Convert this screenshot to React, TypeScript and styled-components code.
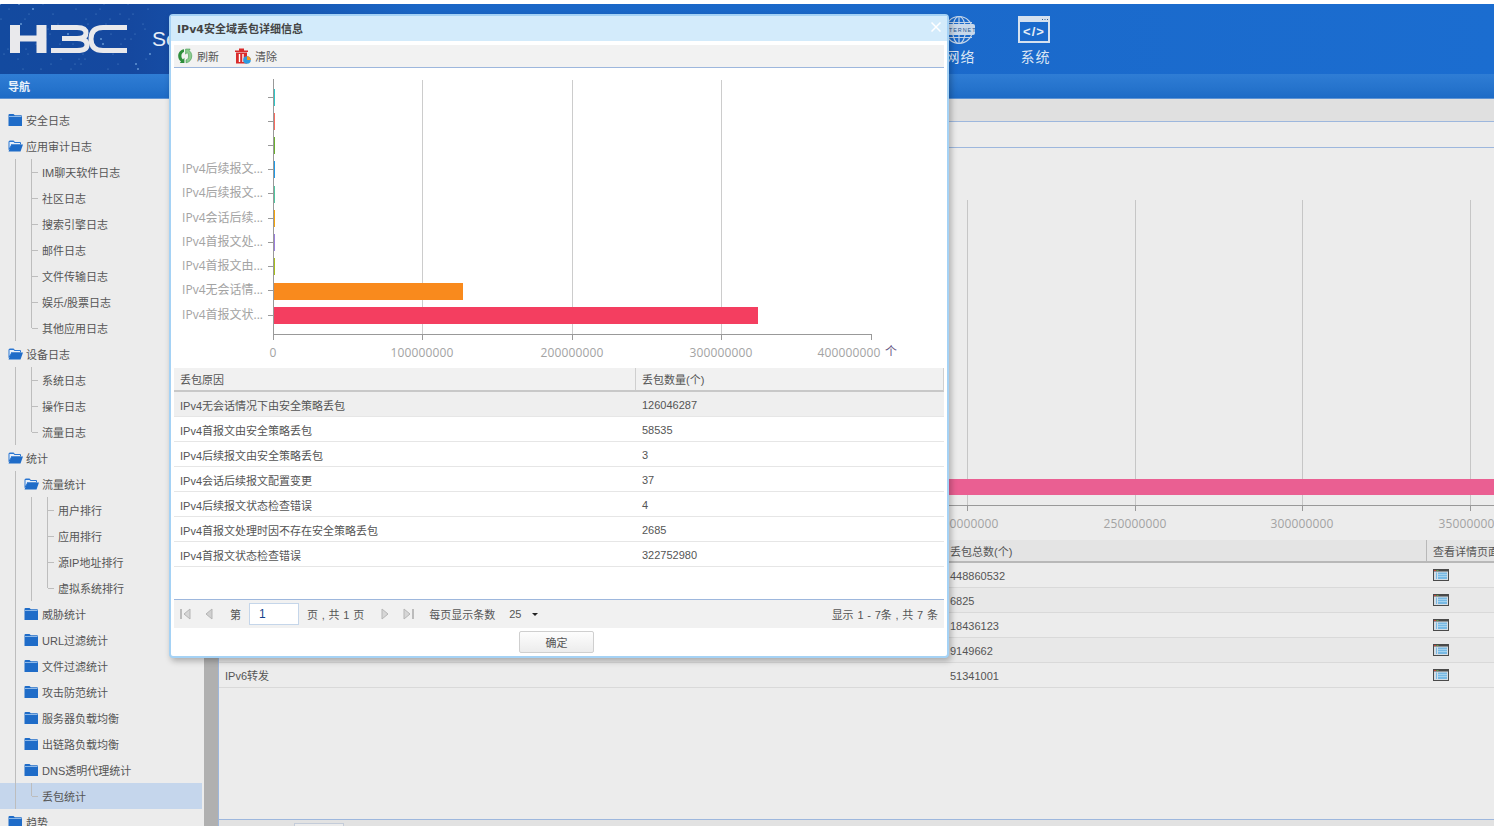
import React from "react";
import styled, { createGlobalStyle } from "styled-components";

const Global = createGlobalStyle`
  html, body { margin: 0; padding: 0; height: 100%; background: #fff; overflow: hidden; }
  * { box-sizing: border-box; }
  body { font-family: "Liberation Sans", "Noto Sans CJK SC", sans-serif; font-size: 11px; color: #555; }
`;

const Page = styled.div`
  position: relative;
  width: 1494px;
  height: 826px;
  padding-top: 4px;
  display: flex;
  flex-direction: column;
  overflow: hidden;
  background: #ececec;
  box-shadow: inset 0 4px 0 #fff;
`;

const Header = styled.header`
  height: 70px;
  flex: none;
  display: flex;
  align-items: flex-start;
  background: linear-gradient(90deg, #134a9f 0, #15489f 130px, #1a66c6 420px, #1b6dd0 100%);
`;
const Brand = styled.div`
  position: relative;
  width: 152px;
  height: 70px;
  flex: none;
`;
const Stars = styled.svg`
  position: absolute;
  inset: 0;
`;
const ProductTitle = styled.div`
  margin-top: 23px;
  font-size: 21px;
  line-height: 24px;
  color: #e6eef8;
`;
const NavGroup = styled.nav`
  margin-left: auto;
  padding-right: 421px;
  display: flex;
`;
const NavItem = styled.div`
  width: 75px;
  height: 70px;
  padding-top: 11px;
  display: flex;
  flex-direction: column;
  align-items: center;
  color: #dbe6f4;
  font-size: 14px;
  line-height: 18px;
  letter-spacing: 1px;
`;
const NavIcon = styled.svg`
  width: 34px;
  height: 30px;
  margin: 0 3px 3px 0;
  flex: none;
`;
const NavBar = styled.div`
  height: 25px;
  flex: none;
  padding-left: 8px;
  display: flex;
  align-items: center;
  font-weight: bold;
  font-size: 11px;
  color: #e9f1fb;
  background: linear-gradient(#2f7dd5, #2573cc 60%, #1d6bc6);
  border-bottom: 1px solid #5e93d3;
`;
const Main = styled.div`
  flex: 1;
  min-height: 0;
  display: flex;
`;

const Sidebar = styled.aside`
  width: 204px;
  flex: none;
  padding: 8px 2px 0 0;
  overflow: hidden;
  background: #ececec;
`;
const TreeRow = styled.div<{ $selected?: boolean }>`
  height: 26px;
  padding-left: 8px;
  display: flex;
  align-items: center;
  white-space: nowrap;
  color: #555;
  background: ${(p) => (p.$selected ? "#c5d6ec" : "transparent")};
`;
const Guide = styled.span<{ $kind: "line" | "tee" | "end" }>`
  position: relative;
  width: 16px;
  height: 26px;
  flex: none;
  &::before {
    content: "";
    position: absolute;
    left: 7px;
    top: 0;
    width: 1px;
    height: ${(p) => (p.$kind === "end" ? "13px" : "26px")};
    background: #bdbdbd;
  }
  &::after {
    content: "";
    display: ${(p) => (p.$kind === "line" ? "none" : "block")};
    position: absolute;
    left: 8px;
    top: 13px;
    width: 6px;
    height: 1px;
    background: #bdbdbd;
  }
`;
const LeafLabel = styled.span`
  margin-left: 2px;
`;
const FolderIcon = styled.svg`
  width: 15px;
  height: 14px;
  margin-right: 3px;
  margin-top: -1px;
  flex: none;
`;
const Splitter = styled.div`
  width: 14px;
  flex: none;
  background: #b0b0b0;
`;

const Content = styled.section`
  flex: 1;
  min-width: 0;
  display: flex;
  flex-direction: column;
  border-left: 1px solid #9db7dd;
  background: #ececec;
`;
const TopBand = styled.div`
  height: 23px;
  flex: none;
  background: #e0e0e0;
  border-bottom: 1px solid #9db7dd;
`;
const SubBand = styled.div`
  height: 26px;
  flex: none;
  border-bottom: 1px solid #9db7dd;
`;
const BackChart = styled.svg`
  display: block;
  width: 1275px;
  height: 392px;
  flex: none;
`;
const BackHead = styled.div`
  height: 23px;
  flex: none;
  display: grid;
  grid-template-columns: 725px 482px 1fr;
  align-items: center;
  background: #e4e4e4;
  border-bottom: 2px solid #b8b8b8;
  white-space: nowrap;
  overflow: hidden;
`;
const BackRow = styled.div<{ $alt?: boolean }>`
  height: 25px;
  flex: none;
  display: grid;
  grid-template-columns: 725px 482px 1fr;
  align-items: center;
  border-bottom: 1px solid #d9d9d9;
  background: ${(p) => (p.$alt ? "#e8e8e8" : "#ececec")};
`;
const BackCell = styled.div<{ $edge?: string; $body?: boolean }>`
  padding-left: 6px;
  padding-top: ${(p) => (p.$body ? 1 : 0)}px;
  height: 100%;
  display: flex;
  align-items: center;
  border-left: ${(p) => (p.$edge ? `1px solid ${p.$edge}` : "none")};
`;
const DetailIcon = styled.svg`
  width: 16px;
  height: 12px;
  margin-top: -2px;
`;
const ScrollFoot = styled.div`
  margin-top: auto;
  height: 7px;
  flex: none;
  padding-left: 75px;
  background: #e2e2e2;
  border-top: 1px solid #9db7dd;
`;
const ScrollThumb = styled.div`
  width: 50px;
  height: 6px;
  margin-top: 3px;
  background: #ececec;
  border: 1px solid #c4ccd9;
  border-bottom: none;
`;

const Dialog = styled.div`
  position: absolute;
  left: 169px;
  top: 14px;
  width: 780px;
  height: 644px;
  display: flex;
  flex-direction: column;
  background: #fff;
  border: 2px solid #a5d2f5;
  border-radius: 4px;
  box-shadow: 2px 3px 6px rgba(0, 0, 0, 0.28);
`;
const DialogTitle = styled.div`
  height: 25px;
  flex: none;
  padding: 0 6px 2px;
  display: flex;
  align-items: center;
  justify-content: space-between;
  font-family: "DejaVu Sans", "Noto Sans CJK SC", sans-serif;
  font-weight: bold;
  color: #444;
  background: #d3ebfb;
`;
const CloseIcon = styled.svg`
  width: 10px;
  height: 10px;
  margin: -1px 0 0;
`;
const DialogBody = styled.div`
  flex: 1;
  min-height: 0;
  padding: 4px 3px 0;
  display: flex;
  flex-direction: column;
`;
const Toolbar = styled.div`
  height: 23px;
  flex: none;
  display: flex;
  align-items: center;
  padding-left: 3px;
  background: #f2f2f2;
  border-bottom: 1px solid #9db7dd;
`;
const ToolButton = styled.div`
  display: flex;
  align-items: center;
  gap: 4px;
  margin-right: 16px;
`;
const ToolIcon = styled.svg`
  width: 16px;
  height: 16px;
  flex: none;
`;
const ChartSvg = styled.svg`
  display: block;
  width: 770px;
  height: 300px;
  flex: none;
`;
const ReasonHead = styled.div`
  height: 24px;
  flex: none;
  display: grid;
  grid-template-columns: 461px 1fr;
  align-items: center;
  background: #f1f1f1;
  border-bottom: 2px solid #c8c8c8;
  border-right: 1px solid #d0d0d0;
`;
const ReasonRow = styled.div<{ $active?: boolean }>`
  height: 25px;
  flex: none;
  display: grid;
  grid-template-columns: 461px 1fr;
  align-items: center;
  border-bottom: 1px solid #e6e6e6;
  background: ${(p) => (p.$active ? "#efefef" : "#fff")};
`;
const ReasonCell = styled.div<{ $edge?: string; $body?: boolean }>`
  height: 100%;
  padding-left: 6px;
  padding-top: ${(p) => (p.$body ? 1 : 0)}px;
  padding-bottom: ${(p) => (p.$body ? 0 : 1)}px;
  display: flex;
  align-items: center;
  border-left: ${(p) => (p.$edge ? `1px solid ${p.$edge}` : "none")};
`;
const Pager = styled.div`
  margin-top: auto;
  height: 29px;
  flex: none;
  display: flex;
  align-items: center;
  background: #f1f1f1;
  border-top: 1px solid #9db7dd;
  padding: 0 6px;
  word-spacing: 0.7px;
`;
const PagerIcon = styled.svg<{ $gap?: number }>`
  width: 12px;
  height: 14px;
  flex: none;
  margin-right: ${(p) => p.$gap ?? 0}px;
`;
const PagerText = styled.span<{ $gap?: number }>`
  white-space: nowrap;
  margin-right: ${(p) => p.$gap ?? 0}px;
`;
const PageInput = styled.div`
  width: 50px;
  height: 22px;
  flex: none;
  margin-right: 8px;
  padding-left: 9px;
  display: flex;
  align-items: center;
  font-size: 12px;
  color: #15428b;
  background: #fff;
  border: 1px solid #c5d6ea;
`;
const Caret = styled.span`
  width: 0;
  height: 0;
  border-left: 3px solid transparent;
  border-right: 3px solid transparent;
  border-top: 3px solid #222;
`;
const PagerRight = styled.span`
  margin-left: auto;
  white-space: nowrap;
`;
const DialogFoot = styled.div`
  height: 28px;
  flex: none;
  padding-right: 5px;
  display: flex;
  align-items: center;
  justify-content: center;
`;
const OkButton = styled.div`
  width: 75px;
  height: 22px;
  display: flex;
  align-items: center;
  justify-content: center;
  border: 1px solid #cfcfcf;
  border-radius: 2px;
  background: linear-gradient(#fdfdfd, #ececec);
`;

type GuideKind = "line" | "tee" | "end";
type Node = { label: string; guides?: GuideKind[]; folder?: "open" | "closed"; selected?: boolean };

const L: GuideKind = "line";
const T: GuideKind = "tee";
const E: GuideKind = "end";

const tree: Node[] = [
  { label: "安全日志", folder: "closed" },
  { label: "应用审计日志", folder: "open" },
  { label: "IM聊天软件日志", guides: [L, T] },
  { label: "社区日志", guides: [L, T] },
  { label: "搜索引擎日志", guides: [L, T] },
  { label: "邮件日志", guides: [L, T] },
  { label: "文件传输日志", guides: [L, T] },
  { label: "娱乐/股票日志", guides: [L, T] },
  { label: "其他应用日志", guides: [L, E] },
  { label: "设备日志", folder: "open" },
  { label: "系统日志", guides: [L, T] },
  { label: "操作日志", guides: [L, T] },
  { label: "流量日志", guides: [L, E] },
  { label: "统计", folder: "open" },
  { label: "流量统计", guides: [L], folder: "open" },
  { label: "用户排行", guides: [L, L, T] },
  { label: "应用排行", guides: [L, L, T] },
  { label: "源IP地址排行", guides: [L, L, T] },
  { label: "虚拟系统排行", guides: [L, L, E] },
  { label: "威胁统计", guides: [L], folder: "closed" },
  { label: "URL过滤统计", guides: [L], folder: "closed" },
  { label: "文件过滤统计", guides: [L], folder: "closed" },
  { label: "攻击防范统计", guides: [L], folder: "closed" },
  { label: "服务器负载均衡", guides: [L], folder: "closed" },
  { label: "出链路负载均衡", guides: [L], folder: "closed" },
  { label: "DNS透明代理统计", guides: [L], folder: "closed" },
  { label: "丢包统计", guides: [L, E], selected: true },
  { label: "趋势", folder: "closed" },
];

const Folder = ({ open }: { open: boolean }) => (
  <FolderIcon viewBox="0 0 15 14">
    {open ? (
      <>
        <path d="M0.5 3 Q0.5 1.5 2 1.5 H5.5 L7 3 H12 Q13 3 13 4 V5.5 H4 L2 10 L0.5 11 Z" fill="#2a76d2" />
        <path d="M1.5 3 H5.5 L6.5 4 H12 V5 H3.5 L1.5 9 Z" fill="#e8f0fa" />
        <path d="M3.5 5.5 H15 L12.5 12.5 H0.5 Z" fill="#1f6cc8" />
      </>
    ) : (
      <>
        <path d="M0.5 2 Q0.5 1 1.5 1 H5.5 L6.8 2.3 H13 Q14 2.3 14 3.3 V13 H0.5 Z" fill="#1f6cc8" />
        <path d="M1 3 H13.5 V4 H1 Z" fill="#8fb9e8" />
      </>
    )}
  </FolderIcon>
);

const Window = () => (
  <DetailIcon viewBox="0 0 16 12">
    <rect width="16" height="12" fill="#4a4a4a" />
    <rect x="1" y="2.5" width="14" height="8.5" fill="#d5dde4" />
    <rect x="1" y="1" width="2" height="1" fill="#c9453a" />
    <rect x="3.5" y="1" width="2" height="1" fill="#6a9c4a" />
    <rect x="3" y="3.5" width="1" height="6.5" fill="#77b9e4" />
    <rect x="5" y="3.5" width="9" height="6.5" fill="#77b9e4" />
    <path d="M5 5.5H14M5 7.5H14" stroke="#b9dcf2" strokeWidth="0.7" />
  </DetailIcon>
);

const backRows = [
  { value: "448860532" },
  { value: "6825", alt: true },
  { value: "18436123" },
  { value: "9149662", alt: true },
  { name: "IPv6转发", value: "51341001" },
];

const reasons = [
  ["IPv4无会话情况下由安全策略丢包", "126046287"],
  ["IPv4首报文由安全策略丢包", "58535"],
  ["IPv4后续报文由安全策略丢包", "3"],
  ["IPv4会话后续报文配置变更", "37"],
  ["IPv4后续报文状态检查错误", "4"],
  ["IPv4首报文处理时因不存在安全策略丢包", "2685"],
  ["IPv4首报文状态检查错误", "322752980"],
];

const bars: { y: number; end: number; color: string; tick: number; label?: string }[] = [
  { y: 89, end: 275, color: "#2ec7c9", tick: 97 },
  { y: 113, end: 275, color: "#f96c5f", tick: 121 },
  { y: 137, end: 275, color: "#6ab02e", tick: 145 },
  { y: 161, end: 275, color: "#1e9be8", tick: 169, label: "IPv4后续报文..." },
  { y: 186, end: 275, color: "#4fc7a0", tick: 193, label: "IPv4后续报文..." },
  { y: 210, end: 275, color: "#f5a50d", tick: 218, label: "IPv4会话后续..." },
  { y: 234, end: 275, color: "#9b7fe0", tick: 242, label: "IPv4首报文处..." },
  { y: 258, end: 275, color: "#a8bf1c", tick: 266, label: "IPv4首报文由..." },
  { y: 283, end: 463, color: "#f98a1d", tick: 290, label: "IPv4无会话情..." },
  { y: 307, end: 758, color: "#f43e60", tick: 315, label: "IPv4首报文状..." },
];

const chartFont = '"Open Sans", "Noto Sans CJK SC", sans-serif';

const xTicks = [
  { x: 273, t: "0" },
  { x: 422, t: "100000000" },
  { x: 572, t: "200000000" },
  { x: 721, t: "300000000" },
  { x: 849, t: "400000000" },
];

const backTicks = [
  { x: 967, t: "200000000" },
  { x: 1135, t: "250000000" },
  { x: 1302, t: "300000000" },
  { x: 1470, t: "350000000" },
];

const starField = Array.from({ length: 70 }, (_, i) => ({
  x: (i * 47 + (i % 7) * 13) % 152,
  y: (i * 29 + (i % 5) * 11) % 70,
  r: i % 6 === 0 ? 1 : 0.5,
}));

export default function App() {
  return (
    <Page>
      <Global />
      <Header>
        <Brand>
          <Stars width="152" height="70" viewBox="0 0 152 70">
            {starField.map((s, i) => (
              <circle key={i} cx={s.x} cy={s.y} r={s.r} fill="#8fc0f0" opacity="0.65" />
            ))}
            <g fill="none" stroke="#e9e9ec">
              <path d="M15 21V49M41.5 21V49" strokeWidth="10" />
              <path d="M15 34.5H41.5" strokeWidth="6" />
              <path d="M51 23.5H77Q86 23.5 86 29Q86 34.5 77 34.5H62M77 34.5Q87 34.5 87 41Q87 46.5 77 46.5H51" strokeWidth="5" />
              <path d="M127 23.5H103Q91 23.5 91 35Q91 46.5 103 46.5H127" strokeWidth="5" />
            </g>
          </Stars>
        </Brand>
        <ProductTitle>Se</ProductTitle>
        <NavGroup>
          <NavItem>
            <NavIcon viewBox="0 0 34 30">
              <g fill="none" stroke="#c3d4e8" strokeWidth="1.2">
                <circle cx="17" cy="15" r="13.5" />
                <ellipse cx="17" cy="15" rx="6.5" ry="13.5" />
                <path d="M17 1.5V28.5M4 7.5H30M4 22.5H30" />
              </g>
              <rect x="1" y="9" width="32" height="11" rx="2" fill="#c8d8ea" />
              <text x="17" y="16.8" textAnchor="middle" fontSize="5.4" fontFamily="Liberation Sans" fill="#24558f">INTERNET</text>
            </NavIcon>
            <span>网络</span>
          </NavItem>
          <NavItem>
            <NavIcon viewBox="0 0 34 30">
              <rect x="2" y="2" width="30" height="25" fill="none" stroke="#d5e1ef" strokeWidth="2" />
              <rect x="2" y="2" width="30" height="5" fill="#d5e1ef" />
              <path d="M25 4.5H26M27.5 4.5H28.5M30 4.5H31" stroke="#35608f" strokeWidth="1" />
              <text x="17" y="21" textAnchor="middle" fontSize="13" fontWeight="bold" fontFamily="Liberation Sans" fill="#e6eef7">&lt;/&gt;</text>
            </NavIcon>
            <span>系统</span>
          </NavItem>
        </NavGroup>
      </Header>
      <NavBar>导航</NavBar>
      <Main>
        <Sidebar>
          {tree.map((n) => (
            <TreeRow key={n.label} $selected={n.selected}>
              {(n.guides ?? []).map((g, i) => (
                <Guide key={i} $kind={g} />
              ))}
              {n.folder ? <Folder open={n.folder === "open"} /> : null}
              {n.folder ? <span>{n.label}</span> : <LeafLabel>{n.label}</LeafLabel>}
            </TreeRow>
          ))}
        </Sidebar>
        <Splitter />
        <Content>
          <TopBand />
          <SubBand />
          <BackChart viewBox="219 148 1275 392">
            {backTicks.map((t) => (
              <g key={t.x}>
                <path d={`M${t.x + 0.5} 200V505`} stroke="#c6c6c6" />
                <path d={`M${t.x + 0.5} 505V511`} stroke="#999" />
                <text x={t.x} y="528" textAnchor="middle" fontSize="12" letterSpacing="0.15" fontFamily={chartFont} fill="#a3a3a3">{t.t}</text>
              </g>
            ))}
            <rect x="900" y="479" width="594" height="16" fill="#ea5f92" />
            <path d="M900 505.5H1494" stroke="#999" />
          </BackChart>
          <BackHead>
            <BackCell />
            <BackCell>丢包总数(个)</BackCell>
            <BackCell $edge="#b8b8b8">查看详情页面</BackCell>
          </BackHead>
          {backRows.map((r) => (
            <BackRow key={r.value} $alt={r.alt}>
              <BackCell>{r.name}</BackCell>
              <BackCell $body>{r.value}</BackCell>
              <BackCell $body $edge="transparent">
                <Window />
              </BackCell>
            </BackRow>
          ))}
          <ScrollFoot>
            <ScrollThumb />
          </ScrollFoot>
        </Content>
      </Main>

      <Dialog>
        <DialogTitle>
          <span>IPv4安全域丢包详细信息</span>
          <CloseIcon viewBox="0 0 10 10">
            <path d="M0.5 0.5L9.5 9.5M9.5 0.5L0.5 9.5" stroke="#fff" strokeWidth="1.5" />
          </CloseIcon>
        </DialogTitle>
        <DialogBody>
          <Toolbar>
            <ToolButton>
              <ToolIcon viewBox="0 0 16 16">
                <path d="M7 1.2C3.6 1.6 1.2 4.4 1.2 8C1.2 10.4 2.3 12.4 4 13.6L2.8 15H7.4V9.8L6 11.4C5 10.6 4.4 9.4 4.4 8C4.4 5.9 5.4 4.6 7 4Z" fill="#2f8f3c" />
                <path d="M9 14.8C12.4 14.4 14.8 11.6 14.8 8C14.8 5.6 13.7 3.6 12 2.4L13.2 1H8.6V6.2L10 4.6C11 5.4 11.6 6.6 11.6 8C11.6 10.1 10.6 11.4 9 12Z" fill="#8ccb8f" stroke="#2f8f3c" strokeWidth="0.5" />
              </ToolIcon>
              <span>刷新</span>
            </ToolButton>
            <ToolButton>
              <ToolIcon viewBox="0 0 16 16">
                <path d="M0 2.5H13V4H0ZM4 0.5H9V2.5H4Z" fill="#d92b2b" />
                <path d="M1 4.5H12V15.5H1Z" fill="#d92b2b" />
                <path d="M4.5 6V14M8 6V14" stroke="#fff" strokeWidth="1.4" />
                <circle cx="12" cy="12" r="3.8" fill="#2b9be0" />
                <path d="M12 12V8.2A3.8 3.8 0 0 1 15.8 12Z" fill="#f39a1e" />
              </ToolIcon>
              <span>清除</span>
            </ToolButton>
          </Toolbar>
          <ChartSvg viewBox="174 68 770 300">
            {[422, 572, 721].map((x) => (
              <path key={x} d={`M${x + 0.5} 80V334`} stroke="#cccccc" />
            ))}
            {bars.map((b) => (
              <g key={b.y}>
                <rect x="273" y={b.y} width={b.end - 273} height="17" fill={b.color} />
                <path d={`M268 ${b.tick + 0.5}H273`} stroke="#999" />
                {b.label ? (
                  <text x="263" y={b.tick + 4} textAnchor="end" fontSize="12" fontFamily={chartFont} fill="#a3a3a3">{b.label}</text>
                ) : null}
              </g>
            ))}
            <path d="M273.5 79V335" stroke="#999" />
            <path d="M273 334.5H871.5" stroke="#999" />
            {[273, 422, 572, 721, 871].map((x) => (
              <path key={x} d={`M${x + 0.5} 334V340`} stroke="#999" />
            ))}
            {xTicks.map((t) => (
              <text key={t.x} x={t.x} y="357" textAnchor="middle" fontSize="12" letterSpacing="0.15" fontFamily={chartFont} fill="#a3a3a3">{t.t}</text>
            ))}
            <text x="891" y="356" textAnchor="middle" fontSize="12" fontFamily={chartFont} fill="#6b5a86">个</text>
          </ChartSvg>
          <ReasonHead>
            <ReasonCell>丢包原因</ReasonCell>
            <ReasonCell $edge="#cfcfcf">丢包数量(个)</ReasonCell>
          </ReasonHead>
          {reasons.map(([name, value], i) => (
            <ReasonRow key={name} $active={i === 0}>
              <ReasonCell $body>{name}</ReasonCell>
              <ReasonCell $body $edge="transparent">{value}</ReasonCell>
            </ReasonRow>
          ))}
          <Pager>
            <PagerIcon viewBox="0 0 12 14" $gap={11}>
              <path d="M1 2V12" stroke="#bcbcbc" strokeWidth="2" />
              <path d="M10 2L4 7L10 12Z" fill="#d6d6d6" stroke="#b5b5b5" />
            </PagerIcon>
            <PagerIcon viewBox="0 0 12 14" $gap={15}>
              <path d="M9 2L3 7L9 12Z" fill="#d0d0d0" stroke="#b5b5b5" />
            </PagerIcon>
            <PagerText $gap={8}>第</PagerText>
            <PageInput>1</PageInput>
            <PagerText $gap={15}>页 , 共 1 页</PagerText>
            <PagerIcon viewBox="0 0 12 14" $gap={11}>
              <path d="M3 2L9 7L3 12Z" fill="#d6d6d6" stroke="#b5b5b5" />
            </PagerIcon>
            <PagerIcon viewBox="0 0 12 14" $gap={15}>
              <path d="M2 2L8 7L2 12Z" fill="#d6d6d6" stroke="#b5b5b5" />
              <path d="M11 2V12" stroke="#bcbcbc" strokeWidth="2" />
            </PagerIcon>
            <PagerText $gap={14}>每页显示条数</PagerText>
            <PagerText $gap={11}>25</PagerText>
            <Caret />
            <PagerRight>显示 1 - 7条 , 共 7 条</PagerRight>
          </Pager>
          <DialogFoot>
            <OkButton>确定</OkButton>
          </DialogFoot>
        </DialogBody>
      </Dialog>
    </Page>
  );
}
